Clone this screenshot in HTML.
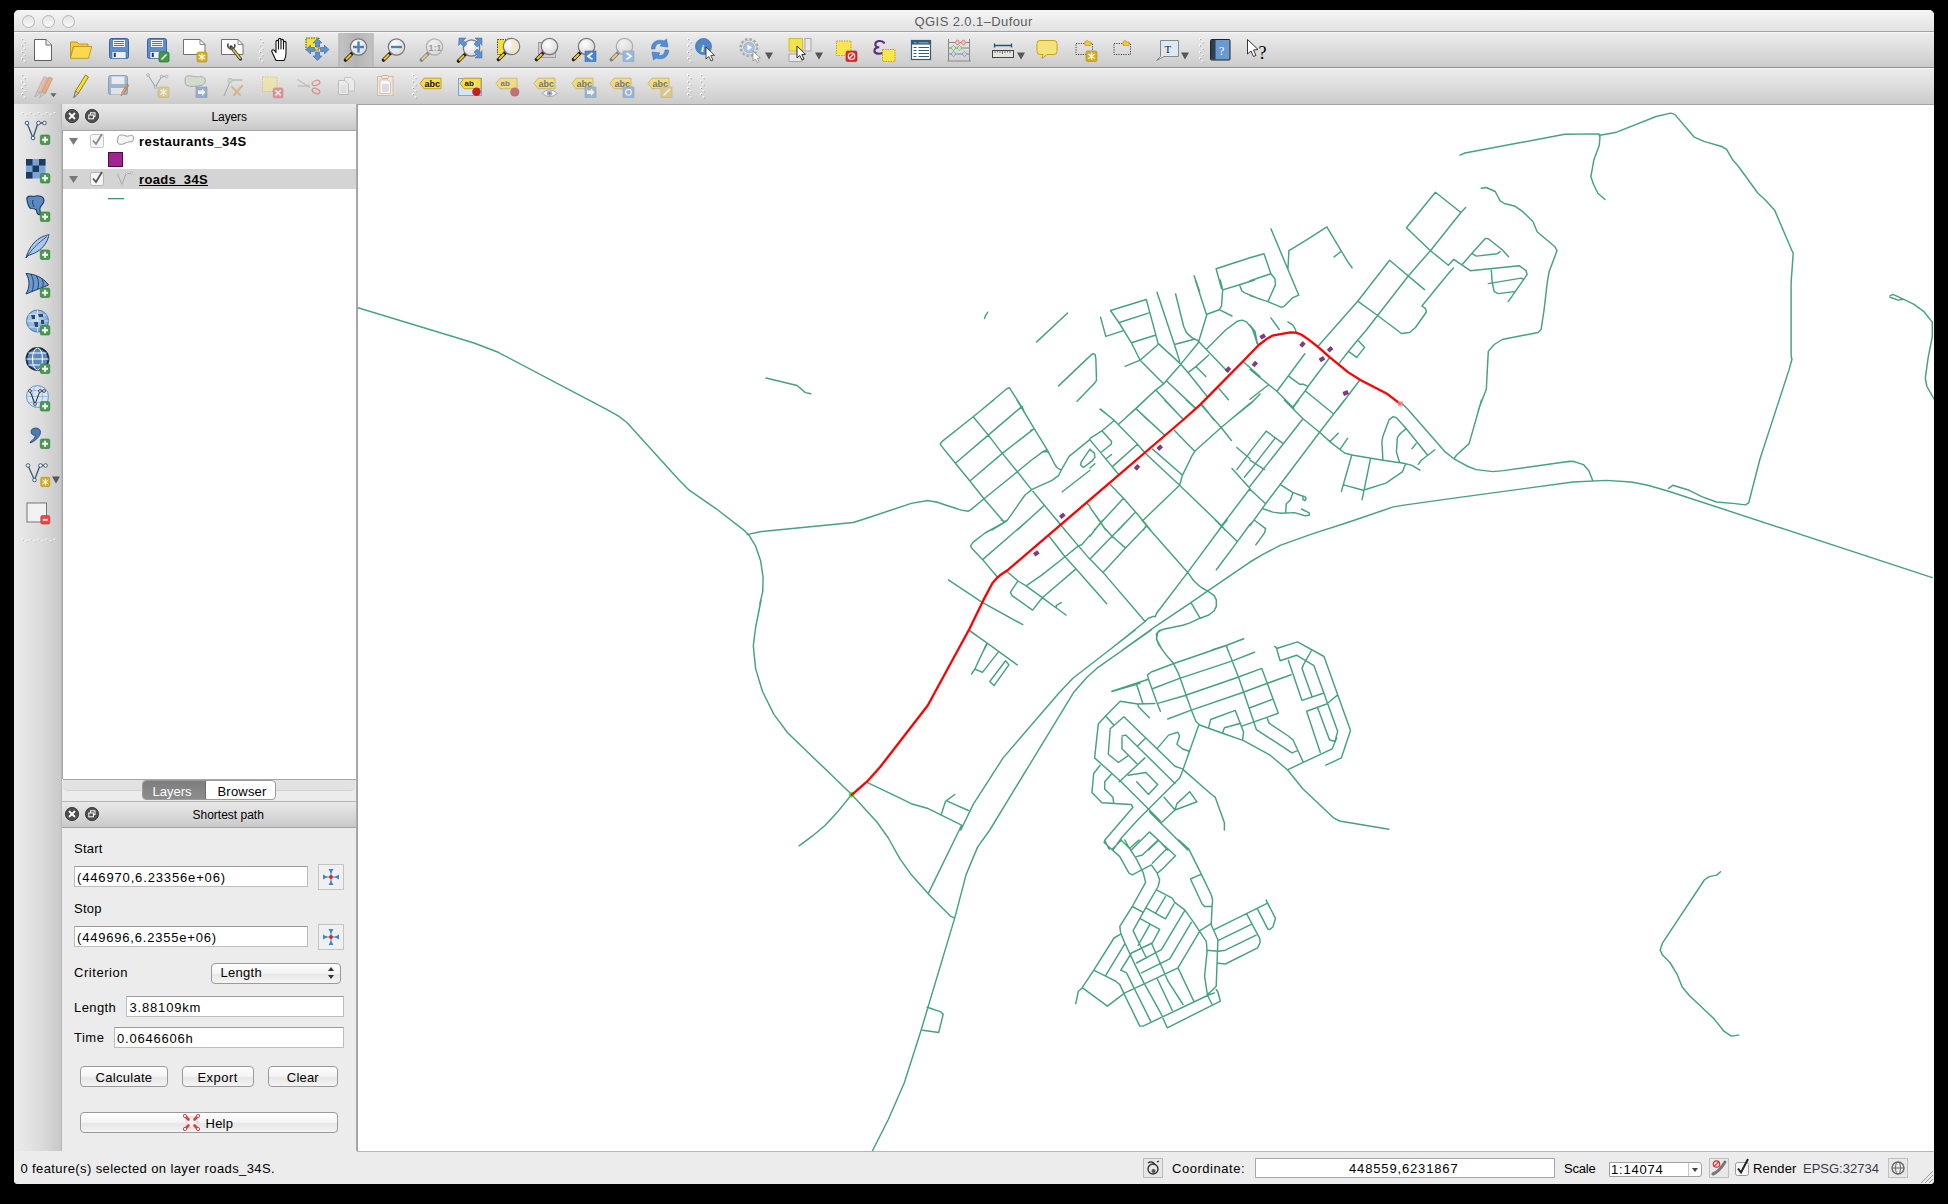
<!DOCTYPE html>
<html><head><meta charset="utf-8"><title>QGIS</title>
<style>
body{margin:0;width:1948px;height:1204px;background:#000;position:relative;overflow:hidden;font-family:"Liberation Sans",sans-serif;color:#000}
.a{position:absolute}
.t{position:absolute;white-space:pre;font-size:13px;line-height:15px}
.tb{background:linear-gradient(#ececec,#d9d9d9 60%,#cbcbcb);border-top:1px solid #f6f6f6;border-bottom:1px solid #8e8e8e}
.grip{position:absolute;width:5px;height:26px;background-image:radial-gradient(circle,#fafafa 0.9px,transparent 1.2px),radial-gradient(circle,#a8a8a8 0.7px,transparent 1px);background-size:4px 4px,4px 4px;background-position:0 0,1px 1px}
.hdr{background:linear-gradient(#e9e9e9,#d4d4d4 70%,#c8c8c8);border-bottom:1px solid #a4a4a4}
.dbtn{position:absolute;width:14px;height:14px;border-radius:50%;background:radial-gradient(circle at 50% 35%,#6a6a6a,#333 80%)}
.inp{position:absolute;background:#fff;border:1px solid #bdbdbd;border-top-color:#9c9c9c;box-sizing:border-box}
.btn{position:absolute;box-sizing:border-box;border:1px solid #9a9a9a;border-radius:4px;background:linear-gradient(#fff,#f3f3f3 50%,#e6e6e6 51%,#f4f4f4);text-align:center;font-size:13px;line-height:19px}
</style></head><body>
<!-- window -->
<div class="a" style="left:14px;top:10px;width:1920px;height:1174px;background:#ececec;border-radius:5px 5px 4px 4px;overflow:hidden">
  <!-- title bar -->
  <div class="a" style="left:0;top:0;width:1920px;height:21px;background:linear-gradient(#f5f5f5,#e2e2e2);border-bottom:1px solid #a2a2a2"></div>
  <div class="a" style="left:8px;top:5px;width:11px;height:11px;border-radius:50%;border:1px solid #b4b4b4;background:linear-gradient(#e2e2e2,#fafafa)"></div>
  <div class="a" style="left:28px;top:5px;width:11px;height:11px;border-radius:50%;border:1px solid #b4b4b4;background:linear-gradient(#e2e2e2,#fafafa)"></div>
  <div class="a" style="left:48px;top:5px;width:11px;height:11px;border-radius:50%;border:1px solid #b4b4b4;background:linear-gradient(#e2e2e2,#fafafa)"></div>
  <div class="t" style="left:900.6px;top:3.7px;font-size:13px;color:#5c5c5c;letter-spacing:0.4px">QGIS 2.0.1–Dufour</div>
  <!-- toolbar 1 -->
  <div class="a tb" style="left:0;top:22px;width:1920px;height:34px"></div>
  <!-- toolbar 2 -->
  <div class="a tb" style="left:0;top:58px;width:1920px;height:35px"></div>
  <!-- left toolbar -->
  <div class="a" style="left:0;top:94px;width:48px;height:1048px;background:linear-gradient(90deg,#ececec,#dadada 60%,#c8c8c8)"></div>
  <!-- status bar -->
  <div class="a" style="left:0;top:1141px;width:1920px;height:33px;background:#ececec"></div>
</div>
<div id="map" class="a" style="left:357px;top:104px;width:1577px;height:1048px;background:#fff;overflow:hidden">
<svg class="a" style="left:0;top:0" width="1577" height="1047" viewBox="0 0 1577 1047"><path fill="none" stroke="#45a27f" stroke-width="1.45" stroke-linejoin="round" stroke-linecap="round" d="M0.0,203.5 116.3,238.8 141.2,248.3 249.1,305.2 261.6,312.2 269.9,318.5 321.8,375.8 332.2,386.2 359.2,404.8 386.2,425.6 392.4,431.8 398.6,442.2 403.6,456.7 406.1,473.4 405.7,487.9 402.8,499.9M390.3,430.6 402.8,427.7 496.2,418.5 506.6,415.2 554.3,399.4 570.9,396.5 581.3,398.6 600.0,404.8M409.0,274.0 440.1,281.5 448.4,288.6 453.8,289.8M1103.0,51.1 1108.0,49.0 1207.7,30.3 1240.9,29.9 1243.0,31.2 1259.6,28.2 1299.1,12.5 1313.6,9.1 1317.8,10.4 1337.3,33.2 1346.9,37.4 1365.6,42.8 1369.7,45.7 1375.9,56.1 1381.3,62.3 1400.9,89.3 1407.1,94.7 1417.5,105.9 1436.2,149.5 1434.1,178.6 1434.1,251.3 1434.9,255.5 1432.0,265.9 1402.9,355.2 1391.7,398.8 1388.4,400.9 1378.0,399.6 1359.3,398.0 1344.8,392.6 1332.3,386.3 1315.7,381.3 1311.6,384.3M1241.8,29.9 1243.0,33.2 1242.2,41.5 1236.8,56.1 1233.9,72.7 1236.8,81.0 1240.9,89.3 1248.0,95.5M1207.7,358.1 1216.0,357.2 1226.4,360.6 1231.8,366.8 1235.5,375.9M1216.0,378.0 1249.2,376.4 1274.2,378.0 1290.8,381.3 1311.6,387.2 1575.3,473.6M1533.0,191.9 1535.9,190.3 1546.3,195.2 1541.3,196.1 1533.0,193.2M1546.3,195.2 1556.6,200.2 1567.0,207.7 1575.3,218.1 1575.3,232.6 1571.2,253.4 1568.3,274.2 1569.9,282.5 1577.0,294.9M404.1,496.0 398.6,523.5 396.3,541.8 398.6,564.6 405.5,587.5 416.9,610.4 430.6,628.7 494.7,690.5 519.9,718.0 531.3,734.0 542.8,754.6 554.2,770.6 572.5,791.2 593.1,811.8 597.7,814.1M442.1,741.8 455.8,731.7 468.2,721.2 481.0,707.4 494.7,690.5M509.4,678.2 540.5,692.8 554.2,699.7 570.2,704.2 604.6,721.2M571.6,788.9 604.6,721.2M584.0,711.1 588.5,697.4 597.7,690.5M590.8,697.4 611.4,706.5M515.3,1047.0 531.3,1015.5 547.3,978.8 563.4,928.5 597.7,814.1 609.1,770.6 620.6,743.1 632.8,726.0M565.7,926.2 581.7,928.5 586.2,910.2 584.0,907.9 570.2,903.3M627.4,214.5 628.8,211.1 630.8,208.2M679.7,237.9 710.6,209.0M701.6,281.9 730.5,254.4 735.5,249.8 738.1,250.4 738.9,255.4 739.5,276.3 737.5,279.3 720.1,297.3M624.4,306.0 649.8,284.7 652.4,283.7 654.7,287.3 666.7,306.0M660.7,306.0 665.7,302.9M859.1,164.7 893.0,153.7M859.1,164.7 864.5,184.6M837.2,171.7 842.6,187.6M743.6,213.2 748.8,232.4 765.7,226.9M753.5,206.5 789.3,195.5 801.1,239.4M753.5,206.5 762.2,219.0 774.4,238.8 783.1,256.2 805.8,278.9M809.9,277.2 838.3,303.9M798.8,285.9 826.7,316.0M779.0,304.5 790.7,316.0M743.0,305.1 757.0,316.0M766.3,316.0 798.8,285.9 806.4,280.1 823.2,260.9 841.3,238.8 850.0,210.3 862.2,205.7 864.5,202.2 865.7,185.9 863.3,176.0M865.7,185.9 882.5,180.7 897.7,176.0M882.5,180.7 884.9,187.0 887.8,188.8 903.0,195.2M862.2,205.7 875.0,212.0M831.4,268.4 838.9,262.6 851.7,251.0M849.4,245.2 868.6,226.0 880.2,217.3 884.9,216.1 889.5,217.9 895.3,224.8 898.2,233.0 900.0,239.4M800.0,188.2 817.4,240.5 822.7,257.4M818.6,190.0 826.7,222.5 829.6,228.9 834.9,233.6 840.7,236.5 870.9,267.9M817.4,240.5 837.2,235.3M801.1,239.4 822.7,259.1 831.4,269.0 850.0,292.3M838.9,262.6 848.8,272.5M886.6,258.0 903.0,272.5M861.6,284.1 871.5,295.8M845.3,301.0 857.0,316.0M838.3,176.0 849.4,210.3M873.2,316.0 895.3,298.1 903.0,290.0M761.6,218.8 791.3,209.1M774.4,238.8 798.2,231.2M768.0,262.3 783.1,256.2 801.1,240.5M893.0,153.7 907.0,149.7 913.9,169.7 917.9,174.7 918.5,180.6 910.9,197.6M893.0,176.7 913.9,169.7M893.0,191.6 910.9,197.6 923.9,203.2 926.9,202.6 935.9,193.6 941.8,191.2 913.9,124.8M930.9,165.7 931.9,146.7 934.9,144.8 952.8,133.8 969.8,122.8 990.7,157.7 995.1,163.7M977.1,152.9 983.7,147.7M1073.4,146.7 1049.5,123.8 1078.4,88.3 1103.9,108.5 1108.7,103.5M935.4,303.7 948.1,287.0 951.9,281.3 972.4,254.0M982.5,258.9 991.5,247.3 1000.1,236.8 1009.4,226.0 1020.6,211.5 1051.5,171.7 1073.4,146.7 1103.9,108.5M1073.4,146.7 1091.4,161.3 1096.8,155.3 1113.3,166.7 1162.2,161.7 1169.1,166.7 1170.1,170.7 1151.2,197.6M1105.9,159.7 1116.3,147.7 1128.3,134.4 1131.3,134.8 1145.2,145.8 1151.6,152.7M1115.3,149.7 1119.3,152.1 1140.2,149.7 1143.2,147.7M1134.2,164.7 1135.2,178.6 1137.2,187.6 1141.2,189.6 1157.2,187.6M1131.3,179.6 1164.2,174.1 1166.5,175.3M960.8,242.4 1000.7,197.2 1032.6,156.3 1067.5,185.6M1000.7,197.2 1020.6,211.5 1044.5,229.5 1052.5,228.5 1058.5,223.5 1069.4,208.0 1068.5,204.6 1064.9,202.0 1090.4,170.7 1096.4,164.1M992.1,247.8 999.7,253.4 1007.6,243.4 1001.7,237.1M893.0,265.4 919.9,287.3 936.9,304.3M919.9,287.3 947.8,249.8M931.9,272.4 942.8,280.3 946.8,280.3 950.8,282.3M893.0,295.3 910.9,281.3M948.8,287.3 971.8,306.0M980.1,306.0 1002.7,276.3M1124.3,84.3 1129.3,83.5 1138.2,87.5 1143.2,96.9 1147.2,99.5 1158.2,102.3 1166.1,107.9 1176.1,117.8 1180.1,127.8 1198.0,142.8 1200.0,146.7 1192.1,167.7 1190.1,179.6 1187.1,205.6 1184.1,225.5 1181.1,228.5 1145.2,235.5 1137.2,240.5 1131.3,247.4 1129.3,285.3 1121.3,306.0M913.9,213.9 922.3,225.5M930.9,217.9 935.9,221.1 938.5,225.5 938.9,228.5M893.0,221.1 898.0,227.5 900.0,237.5 901.0,240.5M636.7,296.0 616.2,312.7 584.9,337.6 583.3,339.7 584.3,341.9 598.4,359.2 612.9,377.0 627.0,394.8 647.5,418.5M659.9,296.0 664.2,303.0 677.2,324.6 690.1,345.7 697.7,360.2 699.9,363.5 704.2,366.2 701.5,371.6 695.0,376.4 675.6,385.1 668.0,391.0 662.6,398.6 654.5,410.4 650.2,416.4 647.5,418.5 635.1,426.0M616.2,312.7 631.3,331.1 645.3,349.4 660.4,367.8 674.5,385.6 687.4,401.3 708.0,426.0M664.2,303.0 631.3,331.1 598.4,359.2M677.2,324.6 645.3,349.4 612.9,377.0M673.9,326.2 677.2,325.1M690.1,345.7 686.4,347.3 673.9,356.5 660.4,367.8 627.0,394.8 614.0,405.6 611.3,407.2 604.3,406.1 589.2,401.3 579.5,398.0 573.0,396.9M685.3,347.8 690.7,347.8M687.4,401.3 660.4,426.0M705.3,387.8 733.0,366.2M704.2,366.2 712.3,352.1 717.1,348.4 733.0,335.4M733.0,345.1 724.1,358.1 723.6,360.8 726.3,363.5 733.0,358.6M730.1,399.6 733.0,402.3M743.8,305.2 757.3,316.5 780.5,340.3 789.1,350.0 822.6,381.3 864.7,421.8 868.0,426.0M788.1,296.0 778.9,304.6 762.1,319.8M757.3,316.5 744.9,326.8 733.0,334.3M744.9,326.8 754.6,337.6 754.1,340.3 744.9,347.8M733.0,335.9 743.8,348.9 761.6,370.5M754.6,350.5 749.2,354.8M733.0,345.7 737.3,348.9 737.9,353.2 735.2,357.0 733.0,358.1M733.0,364.0 737.9,359.7M780.5,340.3 756.2,361.9M778.9,304.6 807.5,331.1M807.5,296.0 826.4,315.4M829.1,296.0 838.3,304.1M844.7,301.4 864.2,323.5 874.4,336.5M817.2,326.2 837.7,347.3 864.2,323.5 893.0,299.2M837.7,347.3 834.5,352.7 825.3,371.6 822.6,381.3M795.6,345.1 825.3,371.0M753.0,380.2 766.5,394.2 785.9,416.4 793.5,426.0M733.0,403.4 743.8,418.5 748.7,426.0M766.5,394.2 737.3,426.0M777.8,408.8 761.6,426.0M822.6,381.3 785.9,416.4M789.1,421.8 786.4,426.0M893.0,384.5 864.7,421.8 862.0,426.0M875.0,364.6 893.0,384.5M879.8,343.5 893.0,354.8M879.8,365.6 893.0,348.4M887.4,373.2 893.0,366.2M650.2,416.0 647.5,418.2 639.9,422.5 628.1,429.0 616.2,438.1 613.5,441.9 615.1,444.6 625.9,455.9 640.5,473.2M644.3,416.0 647.5,417.6 650.2,416.0M671.2,416.0 625.9,455.4M699.9,416.0 708.5,426.8 721.4,441.9 733.0,455.4M691.8,431.7 708.0,452.7 718.7,464.6 733.0,480.8M650.2,467.8 661.0,477.0 669.1,481.9 685.3,493.7 699.3,504.0 709.0,511.0M661.0,477.0 655.1,485.6 653.4,488.3 655.1,491.6 675.6,506.1 685.3,493.7 718.7,465.1M669.1,481.9 684.7,471.1 707.4,453.2 721.4,441.9 724.7,440.8 733.0,431.1M699.3,504.0 699.3,501.3 704.2,498.6M591.4,475.9 624.8,498.1 665.8,520.7M612.4,526.7 639.9,546.0M629.7,540.7 627.0,546.0M733.0,432.2 743.8,418.2 746.0,416.0M741.6,416.0 743.8,418.2 747.0,423.6 755.1,432.2 768.6,444.1M770.8,416.0 755.1,432.2 733.0,454.9M733.0,454.9 746.0,468.4 788.1,517.5M789.7,421.9 768.6,444.1 746.0,468.4M784.8,416.0 789.7,421.9 830.7,468.4 836.6,476.5 841.0,480.8 845.3,484.0 851.2,487.3 857.2,491.6 859.3,495.9 859.3,502.4 857.2,506.7 851.8,511.0 843.1,514.2 832.3,519.1 825.8,521.3 807.5,525.0 802.1,526.7 799.4,529.9 799.9,535.8 805.3,546.0M870.1,416.0 864.7,422.5 830.7,468.4 803.2,504.5 799.9,508.8 798.3,512.6 795.6,512.6 791.3,514.2 788.1,517.5 752.4,546.0M858.2,416.0 864.7,422.5 880.4,437.6M893.0,420.3 880.4,437.6 859.3,465.7M893.0,458.1 851.2,486.7 833.9,498.6 797.8,522.9 765.4,546.0M833.9,498.6 843.1,514.2M733.0,480.8 749.7,499.7M855.0,546.0 869.6,541.2 886.8,534.8M869.6,541.2 870.7,546.0M927.3,296.0 946.0,314.7 962.6,328.2 974.0,338.6 987.5,349.0 994.8,351.0 1025.9,356.2 1046.7,359.3 1055.0,361.4 1062.9,366.2M959.5,296.0 976.1,309.5M987.5,296.0 962.6,328.2 908.6,399.8 893.0,421.6M946.0,314.7 893.0,382.2M893.0,347.9 909.2,327.1 926.2,339.6M917.9,334.4 893.0,366.6M893.0,356.2 907.5,365.6M893.0,385.3 908.6,399.8M941.8,296.0 936.2,303.3M893.0,299.7 897.2,296.0M972.9,337.5 981.3,329.2M983.3,344.8 990.6,334.4M994.8,351.0 984.4,387.4M987.5,381.1 1006.2,386.3 1029.0,379.1 1045.6,367.6 1048.3,360.4M1013.4,355.2 1005.1,395.7M1025.9,356.2 1024.9,337.5 1025.9,332.3 1032.1,315.7 1036.3,312.6 1039.4,313.7 1048.7,324.0 1070.5,351.0M1042.5,358.3 1039.4,347.9 1040.4,333.4 1043.6,329.2 1048.7,325.1M1055.0,344.8 1059.1,339.6M1061.2,360.4 1064.3,356.2 1077.8,345.8M1044.6,299.1 1050.8,305.3 1088.2,347.9 1097.5,355.2 1111.0,362.5 1119.3,365.6 1136.0,367.6 1146.3,366.6 1213.0,357.3M1097.5,354.1 1099.6,351.0 1112.1,339.6 1124.5,296.0M893.0,458.0 905.5,450.7 923.1,441.4 955.3,429.9 990.6,418.5 1036.3,402.9 1048.7,400.9 1100.7,393.6 1216.0,378.0M924.1,381.1 935.6,388.4 943.9,391.5 948.0,392.6 949.1,394.6 948.0,396.7 946.0,395.7 946.0,392.6M935.6,389.4 933.5,395.7 929.3,399.8 928.7,408.1M906.5,405.0 915.8,408.1 924.1,409.2 937.6,408.6 948.0,411.7 952.2,411.2 952.2,408.8 944.5,405.0M893.0,420.6 897.2,416.0 908.6,424.7 907.5,428.9 902.3,436.2 898.8,440.7M804.3,526.0 800.7,528.7 799.4,535.1 801.6,540.6 808.9,550.7 816.2,558.9 821.7,569.9 834.5,606.4 839.0,617.4 842.7,621.0 865.5,629.3 886.6,636.6 913.1,651.2 930.4,665.8 946.0,685.0 977.0,714.2 982.5,717.0 1031.9,725.2M755.0,587.2 791.5,575.3 790.6,570.8 794.3,568.0 816.2,559.8 869.2,541.5 886.6,534.8M796.1,584.5 822.6,574.4 874.7,557.1 897.5,548.3M801.6,599.1 827.2,591.8 880.2,573.5 904.8,564.4 921.3,609.2 885.6,621.9M810.7,615.0 833.6,606.4 885.6,588.5 911.2,579.0 934.1,570.8M779.7,580.8 786.0,600.0M791.5,575.3 799.8,598.2 803.4,607.3M869.2,541.5 882.0,574.4 899.4,625.6 935.0,648.8 940.5,646.6M910.3,614.6 912.1,619.2 931.3,632.0 935.9,635.7 941.4,647.5 946.0,657.6M893.0,603.7 915.8,595.1M851.8,622.9 853.7,615.5 878.3,606.4 886.6,628.3 885.6,635.7M865.5,629.3 867.4,623.8 883.8,619.2M917.6,542.4 920.4,544.3 940.5,537.9 967.0,552.5 993.5,626.5 984.3,653.9 968.8,661.2M919.5,544.3 923.1,556.7 939.6,551.2 956.9,561.6 980.7,627.4 977.9,637.5 972.5,635.7 960.6,603.7M954.2,547.0 946.9,559.8 945.0,564.4 955.1,592.7M931.3,556.2 945.0,596.4 967.0,589.0M949.6,607.3 969.7,600.0 980.7,590.9M949.6,607.3 963.3,648.4M930.4,665.8 975.2,644.8 979.8,633.8M780.6,600.0 763.2,597.3 748.6,611.9 741.3,620.1 737.6,653.9 764.1,677.7 803.4,717.0M748.6,611.9 756.8,621.0M797.9,599.5 780.6,600.0 781.5,602.8 792.4,613.7M753.2,624.7 766.9,612.8 818.0,662.2 825.3,664.9M753.2,624.7 751.3,650.3 761.4,658.5 770.5,652.1M765.0,632.0 768.7,631.1 808.9,670.4 818.0,679.5M765.0,633.8 765.0,644.8 779.7,659.4M780.6,642.0 787.9,634.7M800.7,643.9 811.6,631.1 820.8,628.3 822.6,632.0 819.9,640.2 825.3,644.8 832.7,647.5M841.8,621.0 825.3,667.6 822.6,674.0 814.4,682.3 796.1,700.5 779.7,717.0 764.1,734.3 755.9,746.0M825.3,664.9 854.6,690.5 858.2,693.2 867.4,718.8 867.4,726.1M743.1,661.2 736.7,669.5 734.9,688.6 744.9,698.7 774.2,700.5 776.0,703.3 747.7,736.2 752.2,745.3M754.1,670.4 747.7,677.7 747.7,685.0 755.9,693.2 756.8,699.6M762.3,677.7 787.9,653.9M771.4,671.3 788.8,668.5 800.7,680.4 791.5,690.5 779.7,677.7M807.1,693.2 818.0,706.0 804.3,718.8M818.0,706.0 840.0,697.8 832.7,687.7 819.9,699.6 818.0,706.0M792.4,707.8 830.8,746.0M765.0,737.1 774.2,746.0M774.2,746.0 792.4,727.9 801.6,736.2 810.7,746.0M791.5,746.0 801.6,736.2M764.5,736.0 755.4,745.1M782.0,736.0 773.6,743.5M801.1,736.0 785.3,751.0 779.5,752.6M810.2,744.3 795.3,759.3M801.1,736.0 818.5,751.8 804.4,765.9 800.2,769.2M747.9,736.0 747.1,738.5 762.8,752.6 772.0,769.2 775.3,770.9 794.4,760.9M821.8,736.0 831.8,745.1 844.3,770.1 854.2,790.8 855.6,795.8 855.1,802.5 854.2,820.7 860.9,835.7 859.2,882.2 854.2,887.2 850.1,890.5 855.1,900.5M844.3,770.1 833.5,775.0 845.1,800.0 847.6,802.5 855.1,802.5M767.8,736.0 772.0,743.5 779.5,755.1 786.1,768.4 788.6,778.4 775.3,802.5 762.8,822.4 763.7,829.1 767.8,839.0 779.5,863.9 786.9,878.9 803.6,908.8 810.2,923.8M794.4,760.9 800.2,769.2 802.7,775.9 801.1,782.5 788.6,804.1 776.1,826.6 782.0,839.0 789.4,854.0M775.3,802.5 786.1,808.3M799.4,785.8 815.2,794.2 817.7,798.3 827.7,805.8 836.0,817.4 842.6,827.4 849.3,837.4 850.1,847.3 847.6,872.3 850.1,888.9M808.5,792.5 798.6,809.1M789.4,804.1 808.5,814.9 816.9,800.0M782.8,814.4 802.7,825.4 795.3,839.0 774.5,849.0M792.8,820.7 781.1,841.5M827.7,806.6 804.4,845.7 779.5,859.0M834.3,818.3 812.7,854.8 784.5,868.9M842.6,827.4 821.0,863.9 789.4,878.9 767.8,888.9 750.4,902.2 725.5,883.9 721.3,887.2 718.8,899.7M794.4,839.0 811.0,877.2 826.0,900.5M821.0,863.9 836.8,897.2M800.2,874.7 815.2,906.3M762.8,830.7 757.0,834.0 737.1,865.6 725.5,883.1M767.8,839.9 748.7,871.4M774.5,849.0 763.7,866.4M737.1,866.4 758.7,877.2 762.8,880.6 767.8,891.4 782.8,922.1 786.1,922.1 852.6,890.5 857.6,888.9M764.5,866.4 769.5,868.9 793.6,917.1M810.2,923.8 863.4,897.2 860.9,888.0 859.2,885.5M778.2,526.0 715.9,574.2 702.6,588.3 646.1,653.9 616.2,700.4 603.8,726.0M794.3,526.0 740.0,564.2 730.0,573.3 716.7,588.3 632.8,726.0M612.1,526.0 660.2,560.9M629.5,540.1 617.9,565.0 625.4,568.4 641.1,548.4M614.6,570.0 617.9,565.0M648.6,556.7 651.9,560.9 637.0,581.6 632.8,577.5 648.6,556.7M754.9,587.5 783.0,579.2M1363.5,767.7 1359.6,771.1 1352.2,772.6 1347.3,776.0 1305.6,838.8 1303.1,846.2 1305.6,851.1 1312.9,858.5 1320.3,870.7 1325.2,883.0 1332.6,891.8 1357.1,914.9 1366.9,927.2 1374.3,932.1 1381.7,931.1M843.0,826.7 854.2,819.6M849.7,846.2 861.3,847.3 868.4,846.2 899.1,831.2M857.2,825.6 910.6,799.1 909.2,796.1M862.0,836.1 894.2,820.4M889.7,809.9 902.8,834.6 903.2,838.3 900.6,843.9 868.4,860.0 861.3,859.3M900.2,804.3 910.7,824.9 912.5,825.6 915.9,823.0 918.5,814.4 910.6,799.1"/><circle cx="494.7" cy="690.8" r="2.8" fill="#3ddc4a" opacity="0.85"/><path fill="none" stroke="#ff0000" stroke-width="2.3" stroke-linejoin="round" stroke-linecap="round" d="M494.7,690.8 509.9,677.7 522.9,663.3 570.7,601.5 612.5,524.8 626.5,495.9 635.5,479.0 640.4,473.6 643.0,471.3 650.4,466.3 729.8,398.4 826.0,316.0 843.0,300.9 884.8,258.5 901.7,241.0 910.8,234.2 915.3,231.7 922.0,230.3 933.4,228.4 939.0,228.6 944.6,230.8 951.4,235.4 961.6,243.3 972.9,253.4 991.0,268.1 1003.4,276.0 1030.5,290.1 1042.9,299.7"/><rect x="677.0" y="447.7" width="4.6" height="3.4" fill="#92338c" stroke="#3a1040" stroke-width="0.5" transform="rotate(-35 679.3 449.4)"/><rect x="703.0" y="410.1" width="4.6" height="3.4" fill="#92338c" stroke="#3a1040" stroke-width="0.5" transform="rotate(-40 705.3 411.8)"/><rect x="777.7" y="361.6" width="4.6" height="3.4" fill="#92338c" stroke="#3a1040" stroke-width="0.5" transform="rotate(-50 780.0 363.3)"/><rect x="800.4" y="341.9" width="4.6" height="3.4" fill="#92338c" stroke="#3a1040" stroke-width="0.5" transform="rotate(-40 802.7 343.6)"/><rect x="868.7" y="263.8" width="4.6" height="3.4" fill="#92338c" stroke="#3a1040" stroke-width="0.5" transform="rotate(-50 871.0 265.5)"/><rect x="895.5" y="258.3" width="4.6" height="3.4" fill="#92338c" stroke="#3a1040" stroke-width="0.5" transform="rotate(-50 897.8 260.0)"/><rect x="903.4" y="230.8" width="4.6" height="3.4" fill="#92338c" stroke="#3a1040" stroke-width="0.5" transform="rotate(-30 905.7 232.5)"/><rect x="943.2" y="238.7" width="4.6" height="3.4" fill="#92338c" stroke="#3a1040" stroke-width="0.5" transform="rotate(-50 945.5 240.4)"/><rect x="970.8" y="243.6" width="4.6" height="3.4" fill="#92338c" stroke="#3a1040" stroke-width="0.5" transform="rotate(-40 973.1 245.3)"/><rect x="962.7" y="253.4" width="4.6" height="3.4" fill="#92338c" stroke="#3a1040" stroke-width="0.5" transform="rotate(-30 965.0 255.1)"/><rect x="986.4" y="287.3" width="4.6" height="3.4" fill="#92338c" stroke="#3a1040" stroke-width="0.5" transform="rotate(-20 988.7 289.0)"/><rect x="1040.8" y="297.3" width="5" height="5" fill="#ff8080" opacity="0.75"/></svg>
<div class="a" style="left:0;top:0;width:1px;height:1047px;background:#a3a3a3"></div>
<div class="a" style="left:0;top:0;width:1577px;height:1px;background:#a3a3a3"></div>
<div class="a" style="left:0;top:1047px;width:1577px;height:1px;background:#b6b6b6"></div>
</div>
<svg class="a" style="left:0;top:0" width="1948" height="104" viewBox="0 0 1948 104">
<defs>
<linearGradient id="selbg" x1="0" y1="0" x2="1" y2="0"><stop offset="0" stop-color="#c4c4c4"/><stop offset="0.5" stop-color="#b4b4b4"/><stop offset="1" stop-color="#c4c4c4"/></linearGradient>
<radialGradient id="lens" cx="0.4" cy="0.35" r="0.7"><stop offset="0" stop-color="#ffffff"/><stop offset="1" stop-color="#d6d6d6"/></radialGradient>




</defs>
<!-- ===== toolbar 1 ===== -->
<g transform="translate(21,38)"><circle cx="1" cy="1" r="1.1" fill="#fff"/><circle cx="3.5" cy="4.2" r="1.1" fill="#fff"/><circle cx="1" cy="7.4" r="1.1" fill="#fff"/><circle cx="3.5" cy="10.6" r="1.1" fill="#fff"/><circle cx="1" cy="13.8" r="1.1" fill="#fff"/><circle cx="3.5" cy="17" r="1.1" fill="#fff"/><circle cx="1" cy="20.2" r="1.1" fill="#fff"/><circle cx="3.5" cy="23.4" r="1.1" fill="#fff"/>
<circle cx="1.6" cy="1.6" r="0.7" fill="#9c9c9c"/><circle cx="4.1" cy="4.8" r="0.7" fill="#9c9c9c"/><circle cx="1.6" cy="8" r="0.7" fill="#9c9c9c"/><circle cx="4.1" cy="11.2" r="0.7" fill="#9c9c9c"/><circle cx="1.6" cy="14.4" r="0.7" fill="#9c9c9c"/><circle cx="4.1" cy="17.6" r="0.7" fill="#9c9c9c"/><circle cx="1.6" cy="20.8" r="0.7" fill="#9c9c9c"/><circle cx="4.1" cy="24" r="0.7" fill="#9c9c9c"/></g>
<!-- new -->
<path d="M34.5,39.5 H46 L51.5,45 V60.5 H34.5 Z" fill="#fff" stroke="#606060" stroke-width="1"/><path d="M46,39.5 V45 H51.5" fill="#eee" stroke="#606060" stroke-width="0.9"/>
<!-- open -->
<path d="M70.5,42 H77 L79,44 H88 V47 H73 L70.5,58 Z" fill="#f5c93a" stroke="#c29a1d" stroke-width="1"/><path d="M73.5,46.5 H91.8 L88.5,58.3 H70.5 Z" fill="#ffd94f" stroke="#c29a1d" stroke-width="1"/>
<!-- save -->
<rect x="109.5" y="38.5" width="19" height="20" rx="2" fill="#5f8fcb" stroke="#3a659c" stroke-width="1"/><rect x="112.5" y="39.5" width="13" height="8" fill="#f4f4f4" stroke="#3a659c" stroke-width="0.6"/><path d="M114,41.5 H124 M114,43.5 H124 M114,45.5 H124" stroke="#333" stroke-width="0.7"/><rect x="112" y="51.5" width="14" height="7" fill="#eee" stroke="#3a659c" stroke-width="0.6"/><rect x="113.8" y="52.8" width="2" height="4.2" fill="#233f66"/>
<!-- save as -->
<rect x="147.5" y="38.5" width="19" height="20" rx="2" fill="#5f8fcb" stroke="#3a659c" stroke-width="1"/><rect x="150.5" y="39.5" width="13" height="8" fill="#f4f4f4" stroke="#3a659c" stroke-width="0.6"/><path d="M152,41.5 H162 M152,43.5 H162 M152,45.5 H162" stroke="#333" stroke-width="0.7"/><rect x="150" y="51.5" width="14" height="7" fill="#eee" stroke="#3a659c" stroke-width="0.6"/><rect x="151.8" y="52.8" width="2" height="4.2" fill="#233f66"/>
<rect x="159" y="52" width="10" height="10" rx="1.5" fill="#3e9a45" stroke="#2b7a33" stroke-width="0.8"/><path d="M161.5,59.5 L166.5,54.5" stroke="#fff" stroke-width="1.6"/>
<!-- new composer -->
<path d="M183.5,39.5 H200 L205,44.5 V54.5 H183.5 Z" fill="#fff" stroke="#707070" stroke-width="1"/><path d="M200,39.5 V44.5 H205" fill="none" stroke="#707070" stroke-width="0.8"/>
<rect x="197" y="52" width="10" height="10" rx="1.5" fill="#d7ae1c" stroke="#b08b12" stroke-width="0.6"/><path d="M202,53.5 V60.5 M198.8,55 L205.2,59 M198.8,59 L205.2,55" stroke="#fff" stroke-width="1.1"/>
<!-- composer manager -->
<path d="M221.5,39.5 H238 L243,44.5 V54.5 H221.5 Z" fill="#fff" stroke="#707070" stroke-width="1"/><path d="M238,39.5 V44.5 H243" fill="none" stroke="#707070" stroke-width="0.8"/>
<path d="M231,47 L240.5,59" stroke="#333" stroke-width="3.2" stroke-linecap="round"/><path d="M232,48.3 L240,58.2" stroke="#e6c35a" stroke-width="1.8" stroke-linecap="round"/><path d="M228.5,43.5 A3.5,3.5 0 1 0 234.5,44" fill="none" stroke="#555" stroke-width="1.6"/>
<g transform="translate(259,38)"><circle cx="1" cy="1" r="1.1" fill="#fff"/><circle cx="3.5" cy="4.2" r="1.1" fill="#fff"/><circle cx="1" cy="7.4" r="1.1" fill="#fff"/><circle cx="3.5" cy="10.6" r="1.1" fill="#fff"/><circle cx="1" cy="13.8" r="1.1" fill="#fff"/><circle cx="3.5" cy="17" r="1.1" fill="#fff"/><circle cx="1" cy="20.2" r="1.1" fill="#fff"/><circle cx="3.5" cy="23.4" r="1.1" fill="#fff"/>
<circle cx="1.6" cy="1.6" r="0.7" fill="#9c9c9c"/><circle cx="4.1" cy="4.8" r="0.7" fill="#9c9c9c"/><circle cx="1.6" cy="8" r="0.7" fill="#9c9c9c"/><circle cx="4.1" cy="11.2" r="0.7" fill="#9c9c9c"/><circle cx="1.6" cy="14.4" r="0.7" fill="#9c9c9c"/><circle cx="4.1" cy="17.6" r="0.7" fill="#9c9c9c"/><circle cx="1.6" cy="20.8" r="0.7" fill="#9c9c9c"/><circle cx="4.1" cy="24" r="0.7" fill="#9c9c9c"/></g>
<!-- hand -->
<path d="M276,60.5 L272,52 C271,50 273,49 274.5,50.5 L276,52.5 V41.5 C276,40 278.5,40 278.5,41.5 V49 V39.5 C278.5,38 281,38 281,39.5 V49 V40.5 C281,39 283.5,39 283.5,40.5 V49 V42.5 C283.5,41 286,41 286,42.5 V53 C286,57 285,59 284,60.5 Z" fill="#fff" stroke="#111" stroke-width="1.1" stroke-linejoin="round"/>
<!-- pan to selection -->
<rect x="306" y="38" width="13" height="12" fill="#f3e03a" stroke="#222" stroke-width="0.8" stroke-dasharray="1.5,1"/>
<path d="M317.5,38.5 L322,43 H319.5 V47 H315.5 V43 H313 Z M317.5,60.5 L322,56 H319.5 V52 H315.5 V56 H313 Z M306,49.5 L310.5,45 V47.5 H314.5 V51.5 H310.5 V54 Z M329,49.5 L324.5,45 V47.5 H320.5 V51.5 H324.5 V54 Z" fill="#5e91cf" stroke="#3c6aa6" stroke-width="0.6"/>
<!-- zoom in selected -->
<rect x="339" y="33" width="34" height="34" fill="url(#selbg)"/><path d="M339,33 V67 M373,33 V67" stroke="#a9a9a9" stroke-width="1"/>
<g transform="translate(358.5,47)"><line x1="-6" y1="6" x2="-13" y2="13" stroke="#222" stroke-width="3.6" stroke-linecap="round"/><line x1="-7.5" y1="7.5" x2="-12.5" y2="12.5" stroke="#f0c419" stroke-width="2.2" stroke-linecap="butt"/><circle cx="0" cy="0" r="8.2" fill="url(#lens)" stroke="#777" stroke-width="1.2"/></g><path d="M353,47 H364 M358.5,41.5 V52.5" stroke="#4a7fc4" stroke-width="2.4"/>
<!-- zoom out -->
<g transform="translate(396.5,47)"><line x1="-6" y1="6" x2="-13" y2="13" stroke="#222" stroke-width="3.6" stroke-linecap="round"/><line x1="-7.5" y1="7.5" x2="-12.5" y2="12.5" stroke="#f0c419" stroke-width="2.2" stroke-linecap="butt"/><circle cx="0" cy="0" r="8.2" fill="url(#lens)" stroke="#777" stroke-width="1.2"/></g><path d="M391,47 H402" stroke="#4a7fc4" stroke-width="2.4"/>
<!-- zoom native -->
<g opacity="0.45"><g transform="translate(434.5,47)"><line x1="-6" y1="6" x2="-13" y2="13" stroke="#222" stroke-width="3.6" stroke-linecap="round"/><line x1="-7.5" y1="7.5" x2="-12.5" y2="12.5" stroke="#f0c419" stroke-width="2.2" stroke-linecap="butt"/><circle cx="0" cy="0" r="8.2" fill="url(#lens)" stroke="#777" stroke-width="1.2"/></g></g><text x="428.5" y="51" font-size="9" font-weight="bold" fill="#9a9a9a" font-family="Liberation Sans">1:1</text>
<!-- zoom full -->
<g transform="translate(471.5,48)"><line x1="-6" y1="6" x2="-13" y2="13" stroke="#222" stroke-width="3.6" stroke-linecap="round"/><line x1="-7.5" y1="7.5" x2="-12.5" y2="12.5" stroke="#f0c419" stroke-width="2.2" stroke-linecap="butt"/><circle cx="0" cy="0" r="8.2" fill="url(#lens)" stroke="#777" stroke-width="1.2"/></g>
<path d="M459,38 H466 L463.5,40.5 L467,44 L464,47 L460.5,43.5 L458.5,45.5 Z M482,38 H475 L477.5,40.5 L474,44 L477,47 L480.5,43.5 L482,45.5 Z M482,58 H475 L477.5,55.5 L474,52 L477,49 L480.5,52.5 L482,50.5 Z" fill="#5e91cf" stroke="#3c6aa6" stroke-width="0.5"/>
<!-- zoom selection -->
<rect x="497.5" y="39.5" width="8" height="15" fill="#f3e03a" stroke="#222" stroke-width="0.8" stroke-dasharray="1.5,1"/>
<g transform="translate(511.5,46.5)"><line x1="-6" y1="6" x2="-13" y2="13" stroke="#222" stroke-width="3.6" stroke-linecap="round"/><line x1="-7.5" y1="7.5" x2="-12.5" y2="12.5" stroke="#f0c419" stroke-width="2.2" stroke-linecap="butt"/><circle cx="0" cy="0" r="8.2" fill="url(#lens)" stroke="#777" stroke-width="1.2"/></g><path d="M511.5,39 A7.5,7.5 0 0 1 511.5,54 Z" fill="#efe8c8" opacity="0.8"/>
<!-- zoom layer -->
<rect x="538.5" y="42.5" width="17" height="15" fill="#d8c8d8" stroke="#9a8a9a" stroke-width="0.8"/>
<g transform="translate(549.5,46.5)"><line x1="-6" y1="6" x2="-13" y2="13" stroke="#222" stroke-width="3.6" stroke-linecap="round"/><line x1="-7.5" y1="7.5" x2="-12.5" y2="12.5" stroke="#f0c419" stroke-width="2.2" stroke-linecap="butt"/><circle cx="0" cy="0" r="8.2" fill="url(#lens)" stroke="#777" stroke-width="1.2"/></g>
<!-- zoom last -->
<g transform="translate(586.5,46.5)"><line x1="-6" y1="6" x2="-13" y2="13" stroke="#222" stroke-width="3.6" stroke-linecap="round"/><line x1="-7.5" y1="7.5" x2="-12.5" y2="12.5" stroke="#f0c419" stroke-width="2.2" stroke-linecap="butt"/><circle cx="0" cy="0" r="8.2" fill="url(#lens)" stroke="#777" stroke-width="1.2"/></g>
<rect x="585" y="51" width="11" height="10.5" fill="#4f86c8" stroke="#3a6aa8" stroke-width="0.6"/><path d="M592.5,53 L588,56.2 L592.5,59.4" fill="none" stroke="#fff" stroke-width="1.7"/>
<!-- zoom next -->
<g opacity="0.5"><g transform="translate(624.5,46.5)"><line x1="-6" y1="6" x2="-13" y2="13" stroke="#222" stroke-width="3.6" stroke-linecap="round"/><line x1="-7.5" y1="7.5" x2="-12.5" y2="12.5" stroke="#f0c419" stroke-width="2.2" stroke-linecap="butt"/><circle cx="0" cy="0" r="8.2" fill="url(#lens)" stroke="#777" stroke-width="1.2"/></g></g>
<rect x="623" y="51" width="11" height="10.5" fill="#9ab8dc" stroke="#86a6cc" stroke-width="0.6"/><path d="M626.5,53 L631,56.2 L626.5,59.4" fill="none" stroke="#fff" stroke-width="1.7"/>
<!-- refresh -->
<path d="M651.5,49 C651,42 658,38.5 664,41 L666.5,39 L668,47 L660,46 L662,44 C658.5,42.5 655,44.5 655,49 Z" fill="#4f8fd4" stroke="#3a72b8" stroke-width="0.6"/>
<path d="M668.5,50 C669,57 662,60.5 656,58 L653.5,60 L652,52 L660,53 L658,55 C661.5,56.5 665,54.5 665,50 Z" fill="#4f8fd4" stroke="#3a72b8" stroke-width="0.6"/>
<g transform="translate(687,38)"><circle cx="1" cy="1" r="1.1" fill="#fff"/><circle cx="3.5" cy="4.2" r="1.1" fill="#fff"/><circle cx="1" cy="7.4" r="1.1" fill="#fff"/><circle cx="3.5" cy="10.6" r="1.1" fill="#fff"/><circle cx="1" cy="13.8" r="1.1" fill="#fff"/><circle cx="3.5" cy="17" r="1.1" fill="#fff"/><circle cx="1" cy="20.2" r="1.1" fill="#fff"/><circle cx="3.5" cy="23.4" r="1.1" fill="#fff"/>
<circle cx="1.6" cy="1.6" r="0.7" fill="#9c9c9c"/><circle cx="4.1" cy="4.8" r="0.7" fill="#9c9c9c"/><circle cx="1.6" cy="8" r="0.7" fill="#9c9c9c"/><circle cx="4.1" cy="11.2" r="0.7" fill="#9c9c9c"/><circle cx="1.6" cy="14.4" r="0.7" fill="#9c9c9c"/><circle cx="4.1" cy="17.6" r="0.7" fill="#9c9c9c"/><circle cx="1.6" cy="20.8" r="0.7" fill="#9c9c9c"/><circle cx="4.1" cy="24" r="0.7" fill="#9c9c9c"/></g>
<!-- identify -->
<circle cx="703.5" cy="46.5" r="8" fill="#4f86c8" stroke="#3f72b0" stroke-width="0.8"/><text x="701" y="51.5" font-size="11" font-weight="bold" font-style="italic" fill="#fff" font-family="Liberation Serif">i</text>
<path d="M706,47 V59 L708.8,56.5 L711,61 L713,60 L710.8,55.6 L714.5,55.3 Z" fill="#fff" stroke="#222" stroke-width="0.8" stroke-linejoin="round"/>
<!-- action -->
<circle cx="749" cy="47.5" r="8" fill="#ececec" stroke="#a8a8a8" stroke-width="3.2" stroke-dasharray="2.4,1.8"/><circle cx="749" cy="47.5" r="7.2" fill="#eeeeee" stroke="#b4b4b4" stroke-width="0.8"/><circle cx="749" cy="47.5" r="5.5" fill="#a9c2e0" stroke="#8aa6c8" stroke-width="0.6"/><path d="M747.5,44.5 V50.5 L752,47.5 Z" fill="#fff"/>
<path d="M753,51 V61 L755.3,59 L757.2,62.5 L759,61.6 L757.2,58.3 L760.3,58 Z" fill="#fff" stroke="#888" stroke-width="0.8" stroke-linejoin="round"/>
<g transform="translate(765,52.5)"><path d="M0,0 H8 L4,7 Z" fill="#555"/></g>
<!-- select -->
<rect x="789" y="38.5" width="13.5" height="12.5" fill="#f4e24a" stroke="#bda400" stroke-width="0.6"/><rect x="805" y="38.5" width="6" height="12.5" fill="#e8e8e8" stroke="#999" stroke-width="0.8"/><rect x="789" y="54" width="13" height="7.5" fill="#e8e8e8" stroke="#999" stroke-width="0.8"/>
<path d="M797,46 V58 L799.8,55.5 L802,60 L804,59 L801.8,54.6 L805.5,54.3 Z" fill="#fff" stroke="#111" stroke-width="0.9" stroke-linejoin="round"/>
<g transform="translate(815,52.5)"><path d="M0,0 H8 L4,7 Z" fill="#555"/></g>
<!-- deselect -->
<rect x="836.5" y="41" width="14.5" height="14.5" fill="#f9e64e" stroke="#b8a000" stroke-width="0.9" stroke-dasharray="1.5,1"/>
<rect x="846" y="51" width="11" height="10.5" rx="1.5" fill="#e02a2a" stroke="#b01818" stroke-width="0.6"/><circle cx="851.5" cy="56.2" r="3.2" fill="none" stroke="#fff" stroke-width="1.1"/><path d="M849.3,58.4 L853.7,54" stroke="#fff" stroke-width="1.1"/>
<!-- expression select -->
<path d="M884,42.8 C881.5,40.2 875.5,40.3 875.3,44.3 C875.2,46.3 877,47.2 879.2,47.3 C876.2,47.4 874.2,48.8 874.4,51 C874.8,54.2 881,54.6 884.6,51.8" fill="none" stroke="#5a2f7a" stroke-width="2.1" stroke-linecap="round"/>
<rect x="882.5" y="49.5" width="12.5" height="12" fill="#f9e64e" stroke="#b8a000" stroke-width="0.9" stroke-dasharray="1.5,1"/>
<!-- attribute table -->
<rect x="911.5" y="40.5" width="19" height="19" fill="#fff" stroke="#355a7a" stroke-width="1.2"/><rect x="912" y="41" width="18" height="3.6" fill="#355a7a"/><path d="M913.5,47.5 H916.5 M918.5,47.5 H929 M913.5,50.5 H916.5 M918.5,50.5 H929 M913.5,53.5 H916.5 M918.5,53.5 H929 M913.5,56.5 H916.5 M918.5,56.5 H929" stroke="#355a7a" stroke-width="1.1"/><path d="M914,42.8 H916.5 M918.5,42.8 H928.5" stroke="#9ab8d0" stroke-width="0.9"/>
<!-- abacus -->
<path d="M948.5,39 V61 M969.5,39 V61 M947.5,61 H971 M948.5,42.5 H969.5 M948.5,48 H969.5 M948.5,54 H969.5" stroke="#888" stroke-width="1"/>
<path d="M957.5,39.8 L960,42.5 L957.5,45.2 L955,42.5 Z M963.5,39.8 L966,42.5 L963.5,45.2 L961,42.5 Z" fill="#f4c4c4" stroke="#d06060" stroke-width="0.8"/>
<path d="M953.5,45.3 L956,48 L953.5,50.7 L951,48 Z M959.5,45.3 L962,48 L959.5,50.7 L957,48 Z" fill="#cde8c8" stroke="#78b070" stroke-width="0.8"/>
<path d="M953.5,51.3 L956,54 L953.5,56.7 L951,54 Z M964.5,51.3 L967,54 L964.5,56.7 L962,54 Z" fill="#c8d8ec" stroke="#7098c0" stroke-width="0.8"/>
<!-- measure -->
<path d="M994.5,43.5 V47.5 M1011.5,43.5 V47.5 M994.5,45.5 H1011.5" stroke="#2a5276" stroke-width="1.3"/>
<rect x="992.5" y="50.5" width="21" height="7" fill="#e4e4dc" stroke="#444" stroke-width="1"/><path d="M995,50.5 V53 M997.5,50.5 V52.5 M1000,50.5 V53 M1002.5,50.5 V54 M1005,50.5 V53 M1007.5,50.5 V52.5 M1010,50.5 V53" stroke="#444" stroke-width="0.7"/>
<g transform="translate(1017,52.5)"><path d="M0,0 H8 L4,7 Z" fill="#555"/></g>
<!-- map tips -->
<path d="M1040,40.5 H1054 Q1057,40.5 1057,43.5 V51.5 Q1057,54.5 1054,54.5 H1047 L1042,58.5 L1043,54.5 H1040 Q1037,54.5 1037,51.5 V43.5 Q1037,40.5 1040,40.5 Z" fill="#f6e27a" stroke="#c9a21a" stroke-width="1"/>
<!-- new bookmark -->
<rect x="1076" y="43.5" width="16.5" height="11" fill="none" stroke="#333" stroke-width="0.9" stroke-dasharray="1.2,1.2"/><path d="M1085,45.5 V41.5 L1087.5,40.3 L1088.5,42 H1091 V45.5 Z" fill="#f2c92e" stroke="#b8920e" stroke-width="0.6"/>
<rect x="1086" y="51" width="11" height="10.5" rx="1.5" fill="#d7ae1c" stroke="#b08b12" stroke-width="0.6"/><path d="M1091.5,52.5 V60 M1088.3,54 L1094.7,58.5 M1088.3,58.5 L1094.7,54" stroke="#fff" stroke-width="1.1"/>
<!-- show bookmarks -->
<rect x="1114" y="43.5" width="16.5" height="11" fill="none" stroke="#333" stroke-width="0.9" stroke-dasharray="1.2,1.2"/><path d="M1123,45.5 V41.5 L1125.5,40.3 L1126.5,42 H1129 V45.5 Z" fill="#f2c92e" stroke="#b8920e" stroke-width="0.6"/>
<!-- text annotation -->
<path d="M1160.5,40.5 H1178.5 V56.5 H1164 L1156.5,60.5 L1160.5,56.5 Z" fill="#dde9f2" stroke="#888" stroke-width="1"/><text x="1164.5" y="52.5" font-size="11" fill="#222" font-family="Liberation Serif">T</text>
<g transform="translate(1181,52.5)"><path d="M0,0 H8 L4,7 Z" fill="#555"/></g>
<g transform="translate(1199,38)"><circle cx="1" cy="1" r="1.1" fill="#fff"/><circle cx="3.5" cy="4.2" r="1.1" fill="#fff"/><circle cx="1" cy="7.4" r="1.1" fill="#fff"/><circle cx="3.5" cy="10.6" r="1.1" fill="#fff"/><circle cx="1" cy="13.8" r="1.1" fill="#fff"/><circle cx="3.5" cy="17" r="1.1" fill="#fff"/><circle cx="1" cy="20.2" r="1.1" fill="#fff"/><circle cx="3.5" cy="23.4" r="1.1" fill="#fff"/>
<circle cx="1.6" cy="1.6" r="0.7" fill="#9c9c9c"/><circle cx="4.1" cy="4.8" r="0.7" fill="#9c9c9c"/><circle cx="1.6" cy="8" r="0.7" fill="#9c9c9c"/><circle cx="4.1" cy="11.2" r="0.7" fill="#9c9c9c"/><circle cx="1.6" cy="14.4" r="0.7" fill="#9c9c9c"/><circle cx="4.1" cy="17.6" r="0.7" fill="#9c9c9c"/><circle cx="1.6" cy="20.8" r="0.7" fill="#9c9c9c"/><circle cx="4.1" cy="24" r="0.7" fill="#9c9c9c"/></g>
<!-- help -->
<rect x="1210.5" y="39.5" width="19.5" height="20.5" rx="1" fill="#6a9bd0" stroke="#222" stroke-width="1"/><rect x="1211" y="40" width="4.5" height="19.5" fill="#2c3e50"/><text x="1219" y="54.5" font-size="12" fill="#fff" font-family="Liberation Serif">?</text>
<!-- what's this -->
<path d="M1247.5,39.5 V54 L1251,51 L1253.5,56.5 L1256,55.4 L1253.5,50 L1258,49.5 Z" fill="#fff" stroke="#222" stroke-width="0.9" stroke-linejoin="round"/><text x="1258.5" y="59" font-size="18" fill="#000" font-family="Liberation Serif">?</text>

<!-- ===== toolbar 2 ===== -->
<g transform="translate(21,74)"><circle cx="1" cy="1" r="1.1" fill="#fff"/><circle cx="3.5" cy="4.2" r="1.1" fill="#fff"/><circle cx="1" cy="7.4" r="1.1" fill="#fff"/><circle cx="3.5" cy="10.6" r="1.1" fill="#fff"/><circle cx="1" cy="13.8" r="1.1" fill="#fff"/><circle cx="3.5" cy="17" r="1.1" fill="#fff"/><circle cx="1" cy="20.2" r="1.1" fill="#fff"/><circle cx="3.5" cy="23.4" r="1.1" fill="#fff"/>
<circle cx="1.6" cy="1.6" r="0.7" fill="#9c9c9c"/><circle cx="4.1" cy="4.8" r="0.7" fill="#9c9c9c"/><circle cx="1.6" cy="8" r="0.7" fill="#9c9c9c"/><circle cx="4.1" cy="11.2" r="0.7" fill="#9c9c9c"/><circle cx="1.6" cy="14.4" r="0.7" fill="#9c9c9c"/><circle cx="4.1" cy="17.6" r="0.7" fill="#9c9c9c"/><circle cx="1.6" cy="20.8" r="0.7" fill="#9c9c9c"/><circle cx="4.1" cy="24" r="0.7" fill="#9c9c9c"/></g>
<!-- pencils -->
<g opacity="0.8"><path d="M37,91.5 L44,76.5 L47.5,78 L40.5,93 Z" fill="#e6b5a0" stroke="#b09080" stroke-width="0.6"/><path d="M37,91.5 L40.5,93 L34.5,97 Z" fill="#c8c8c8" stroke="#888" stroke-width="0.5"/><path d="M42,92 L49,77 L52.5,78.5 L45.5,93.5 Z" fill="#f0a070" stroke="#b07050" stroke-width="0.6"/><path d="M42,92 L45.5,93.5 L39.5,97.5 Z" fill="#d0d0d0" stroke="#888" stroke-width="0.5"/></g>
<path d="M50.3,93.3 H56.5 L53.4,97.3 Z" fill="#666"/>
<!-- pencil -->
<path d="M74,97.5 L75.5,91 L85.5,75 L88.5,77 L78.5,93 Z" fill="#f2df30" stroke="#7a6a10" stroke-width="0.8"/><path d="M74,97.5 L75.5,91 L78.5,93 Z" fill="#ccc" stroke="#555" stroke-width="0.6"/>
<!-- save edits (faded) -->
<g opacity="0.5"><rect x="108.5" y="75.5" width="19" height="19" rx="2" fill="#5f8fcb" stroke="#3a659c" stroke-width="1"/><rect x="111.5" y="76.5" width="13" height="7.5" fill="#f4f4f4"/><rect x="111" y="88" width="13" height="6.5" fill="#eee"/></g>
<path d="M121,96 L122,92 L127,84 L129,85.3 L124,93.3 Z" fill="#e88a50" stroke="#a06030" stroke-width="0.5" opacity="0.8"/>
<g opacity="0.62"><!-- add feature -->
<path d="M148,75 L155.5,87 L161.5,76.5 L166.5,76.5" fill="none" stroke="#5a7a8a" stroke-width="1"/><circle cx="148" cy="75" r="1.3" fill="#fff" stroke="#5a7a8a" stroke-width="0.8"/><circle cx="155.5" cy="87" r="1.3" fill="#fff" stroke="#5a7a8a" stroke-width="0.8"/><circle cx="161.5" cy="76.5" r="1.3" fill="#fff" stroke="#5a7a8a" stroke-width="0.8"/><circle cx="166.5" cy="76.5" r="1.3" fill="#fff" stroke="#5a7a8a" stroke-width="0.8"/>
<rect x="158" y="87" width="11" height="10.5" rx="1.5" fill="#d9bf60" stroke="#c0a040" stroke-width="0.6"/><path d="M163.5,88.5 V96 M160.3,90 L166.7,94.5 M160.3,94.5 L166.7,90" stroke="#fff" stroke-width="1.1"/>
<!-- move feature -->
<path d="M185,79 C185,75 190,75.5 194,76.5 C198,77.5 202,75.5 204.5,78 C206.5,80.5 205,84.5 201,85.5 C196,86.5 190,87 187,85.5 C185,84.5 185,82 185,79 Z" fill="#c4dcc0" stroke="#888" stroke-width="1"/>
<rect x="196" y="87" width="11" height="10.5" fill="#6f96c8" stroke="#5078b0" stroke-width="0.6"/><path d="M198,90.5 H202 V88.5 L205.5,92.2 L202,96 V94 H198 Z" fill="#fff"/>
<!-- node tool -->
<path d="M224,96 L230,82 M230,80 H242.5" stroke="#777" stroke-width="0.9"/><circle cx="230" cy="80.5" r="2.2" fill="#b8dcb8" stroke="#7a9a7a" stroke-width="0.6"/>
<path d="M234,95 L242,86 M232,87 L240,95" stroke="#d9a060" stroke-width="2.2" stroke-linecap="round"/>
<!-- delete selected -->
<rect x="262.5" y="77" width="14.5" height="14.5" fill="#f0e79a" stroke="#c8b840" stroke-width="0.9" stroke-dasharray="1.5,1"/>
<rect x="273.2" y="88" width="9.8" height="9.8" rx="1.5" fill="#e07070" stroke="#c05050" stroke-width="0.6"/><path d="M275.5,90.3 L280.7,95.5 M280.7,90.3 L275.5,95.5" stroke="#fff" stroke-width="1.4"/>
<!-- scissors -->
<path d="M297.5,79.5 L310,87.5 M297.5,86 L310,86" stroke="#999" stroke-width="1"/><ellipse cx="316" cy="83" rx="4" ry="2.3" fill="none" stroke="#d07070" stroke-width="1.4" transform="rotate(-20 316 83)"/><ellipse cx="316" cy="91" rx="4" ry="2.3" fill="none" stroke="#d07070" stroke-width="1.4" transform="rotate(25 316 91)"/>
<!-- copy -->
<path d="M344.5,77.5 H351 L354.5,81 V91 H344.5 Z" fill="#f2f2f2" stroke="#aaa" stroke-width="0.8"/><path d="M338.5,80.5 H345 L348.5,84 V94.5 H338.5 Z" fill="#f4f4f4" stroke="#999" stroke-width="0.8"/><path d="M340.5,86 H346.5 M340.5,88 H346.5 M340.5,90 H346.5 M340.5,92 H346.5" stroke="#bbb" stroke-width="0.6"/>
</g><!-- paste -->
<rect x="377.5" y="76.5" width="15.5" height="19" fill="#f2e6d8" stroke="#d8b890" stroke-width="0.9"/><rect x="381.5" y="75.5" width="7" height="3" rx="1" fill="#f2e6d8" stroke="#c8a880" stroke-width="0.8"/><path d="M380,80 H388 L390.5,82.5 V93.5 H380 Z" fill="#fafafa" stroke="#aaa" stroke-width="0.6"/><path d="M382,85 H389 M382,87 H389 M382,89 H389 M382,91 H389" stroke="#999" stroke-width="0.6"/>
<g transform="translate(412,74)"><circle cx="1" cy="1" r="1.1" fill="#fff"/><circle cx="3.5" cy="4.2" r="1.1" fill="#fff"/><circle cx="1" cy="7.4" r="1.1" fill="#fff"/><circle cx="3.5" cy="10.6" r="1.1" fill="#fff"/><circle cx="1" cy="13.8" r="1.1" fill="#fff"/><circle cx="3.5" cy="17" r="1.1" fill="#fff"/><circle cx="1" cy="20.2" r="1.1" fill="#fff"/><circle cx="3.5" cy="23.4" r="1.1" fill="#fff"/>
<circle cx="1.6" cy="1.6" r="0.7" fill="#9c9c9c"/><circle cx="4.1" cy="4.8" r="0.7" fill="#9c9c9c"/><circle cx="1.6" cy="8" r="0.7" fill="#9c9c9c"/><circle cx="4.1" cy="11.2" r="0.7" fill="#9c9c9c"/><circle cx="1.6" cy="14.4" r="0.7" fill="#9c9c9c"/><circle cx="4.1" cy="17.6" r="0.7" fill="#9c9c9c"/><circle cx="1.6" cy="20.8" r="0.7" fill="#9c9c9c"/><circle cx="4.1" cy="24" r="0.7" fill="#9c9c9c"/></g>
<!-- abc -->
<g transform="translate(420,78.2)"><path d="M4,0 H21 V10.5 H4 L0,5.25 Z" fill="#f7dc4a" stroke="#c9a21a" stroke-width="1"/></g><text x="424.5" y="86.7" font-size="9" font-weight="bold" fill="#111" font-family="Liberation Sans">abc</text>
<!-- pin labels (checked) -->
<rect x="458.5" y="78.5" width="23" height="17" fill="#d8e4f0" stroke="#7aa6e0" stroke-width="1"/><g transform="translate(460,78.2)"><path d="M4,0 H21 V10.5 H4 L0,5.25 Z" fill="#f7dc4a" stroke="#c9a21a" stroke-width="1"/></g><text x="464.5" y="86.2" font-size="8" font-weight="bold" fill="#222" font-family="Liberation Sans">ab</text>
<path d="M475,82 V91" stroke="#ddd" stroke-width="1.5"/><circle cx="476.5" cy="91.8" r="4.3" fill="#c02020"/>
<!-- pin faded -->
<g opacity="0.6"><g transform="translate(496,78.2)"><path d="M4,0 H21 V10.5 H4 L0,5.25 Z" fill="#f7dc4a" stroke="#c9a21a" stroke-width="1"/></g><text x="500.5" y="86.2" font-size="8" font-weight="bold" fill="#333" font-family="Liberation Sans">ab</text><circle cx="514.8" cy="92" r="4.6" fill="#b03030"/></g>
<g opacity="0.62"><!-- show/hide -->
<g><g transform="translate(534,78.2)"><path d="M4,0 H21 V10.5 H4 L0,5.25 Z" fill="#f7dc4a" stroke="#c9a21a" stroke-width="1"/></g><text x="538.5" y="86.7" font-size="9" font-weight="bold" fill="#333" font-family="Liberation Sans">abc</text></g>
<path d="M542,93.3 Q549.5,86.5 557.5,93.3 Q549.5,100 542,93.3 Z" fill="#fff" stroke="#777" stroke-width="0.8"/><circle cx="549.5" cy="93.3" r="2.6" fill="#6f9fd8"/><circle cx="549.5" cy="93.3" r="1" fill="#333"/>
<!-- move label -->
<g><g transform="translate(572,78.2)"><path d="M4,0 H21 V10.5 H4 L0,5.25 Z" fill="#f7dc4a" stroke="#c9a21a" stroke-width="1"/></g><text x="576.5" y="86.7" font-size="9" font-weight="bold" fill="#333" font-family="Liberation Sans">abc</text></g>
<rect x="585" y="87" width="11" height="10.5" fill="#7aa0cc" stroke="#6088b8" stroke-width="0.6"/><path d="M587,90.5 H591 V88.5 L594.5,92.2 L591,96 V94 H587 Z" fill="#fff"/>
<!-- rotate label -->
<g><g transform="translate(610,78.2)"><path d="M4,0 H21 V10.5 H4 L0,5.25 Z" fill="#f7dc4a" stroke="#c9a21a" stroke-width="1"/></g><text x="614.5" y="86.7" font-size="9" font-weight="bold" fill="#333" font-family="Liberation Sans">abc</text></g>
<rect x="623" y="87" width="11" height="10.5" fill="#7aa0cc" stroke="#6088b8" stroke-width="0.6"/><circle cx="628.5" cy="92.2" r="2.8" fill="none" stroke="#fff" stroke-width="1.2"/>
<!-- change label -->
<g><g transform="translate(648,78.2)"><path d="M4,0 H21 V10.5 H4 L0,5.25 Z" fill="#f7dc4a" stroke="#c9a21a" stroke-width="1"/></g><text x="652.5" y="86.7" font-size="9" font-weight="bold" fill="#333" font-family="Liberation Sans">abc</text></g>
<rect x="661" y="87" width="11" height="10.5" fill="#dcc060" stroke="#c0a040" stroke-width="0.6"/><path d="M663.5,95.5 L670,89" stroke="#fff" stroke-width="1.6"/>
</g><g transform="translate(687,74)"><circle cx="1" cy="1" r="1.1" fill="#fff"/><circle cx="3.5" cy="4.2" r="1.1" fill="#fff"/><circle cx="1" cy="7.4" r="1.1" fill="#fff"/><circle cx="3.5" cy="10.6" r="1.1" fill="#fff"/><circle cx="1" cy="13.8" r="1.1" fill="#fff"/><circle cx="3.5" cy="17" r="1.1" fill="#fff"/><circle cx="1" cy="20.2" r="1.1" fill="#fff"/><circle cx="3.5" cy="23.4" r="1.1" fill="#fff"/>
<circle cx="1.6" cy="1.6" r="0.7" fill="#9c9c9c"/><circle cx="4.1" cy="4.8" r="0.7" fill="#9c9c9c"/><circle cx="1.6" cy="8" r="0.7" fill="#9c9c9c"/><circle cx="4.1" cy="11.2" r="0.7" fill="#9c9c9c"/><circle cx="1.6" cy="14.4" r="0.7" fill="#9c9c9c"/><circle cx="4.1" cy="17.6" r="0.7" fill="#9c9c9c"/><circle cx="1.6" cy="20.8" r="0.7" fill="#9c9c9c"/><circle cx="4.1" cy="24" r="0.7" fill="#9c9c9c"/></g><g transform="translate(700,74)"><circle cx="1" cy="1" r="1.1" fill="#fff"/><circle cx="3.5" cy="4.2" r="1.1" fill="#fff"/><circle cx="1" cy="7.4" r="1.1" fill="#fff"/><circle cx="3.5" cy="10.6" r="1.1" fill="#fff"/><circle cx="1" cy="13.8" r="1.1" fill="#fff"/><circle cx="3.5" cy="17" r="1.1" fill="#fff"/><circle cx="1" cy="20.2" r="1.1" fill="#fff"/><circle cx="3.5" cy="23.4" r="1.1" fill="#fff"/>
<circle cx="1.6" cy="1.6" r="0.7" fill="#9c9c9c"/><circle cx="4.1" cy="4.8" r="0.7" fill="#9c9c9c"/><circle cx="1.6" cy="8" r="0.7" fill="#9c9c9c"/><circle cx="4.1" cy="11.2" r="0.7" fill="#9c9c9c"/><circle cx="1.6" cy="14.4" r="0.7" fill="#9c9c9c"/><circle cx="4.1" cy="17.6" r="0.7" fill="#9c9c9c"/><circle cx="1.6" cy="20.8" r="0.7" fill="#9c9c9c"/><circle cx="4.1" cy="24" r="0.7" fill="#9c9c9c"/></g>
</svg>

<!-- layers panel -->
<div class="a" style="left:62px;top:104px;width:294px;height:697px;background:#ececec"></div>
<div class="a" style="left:356px;top:104px;width:1px;height:1047px;background:#a9a9a9"></div>
<div class="a hdr" style="left:62px;top:104px;width:294px;height:26px"></div>
<svg class="a" style="left:62px;top:104px" width="40" height="26"><g><circle cx="10" cy="12" r="6.6" fill="#505050" stroke="#363636" stroke-width="0.9"/><path d="M7.6,9.6 L12.4,14.4 M12.4,9.6 L7.6,14.4" stroke="#fff" stroke-width="2" stroke-linecap="round"/><circle cx="30" cy="12" r="6.6" fill="#505050" stroke="#363636" stroke-width="0.9"/><rect x="28.5" y="8.8" width="4.5" height="3.8" fill="none" stroke="#fff" stroke-width="1"/><rect x="26.8" y="11" width="4.6" height="3.8" fill="#505050" stroke="#fff" stroke-width="1"/></g></svg>
<div class="t" style="left:211.5px;top:109.5px;font-size:12px;letter-spacing:-0.1px">Layers</div>
<div class="a" style="left:62px;top:130px;width:1px;height:649px;background:#a4a4a4"></div>
<div class="a" style="left:63px;top:131px;width:293px;height:648px;background:#fff"></div>
<div class="a" style="left:63px;top:169px;width:293px;height:20px;background:#d4d4d4"></div>
<svg class="a" style="left:63px;top:131px" width="140" height="75">
 <path d="M6,7 H15 L10.5,14 Z" fill="#7a7a7a"/><path d="M6,45 H15 L10.5,52 Z" fill="#7a7a7a"/>
 <rect x="27.5" y="3.5" width="13" height="13" rx="2" fill="#f6f6f6" stroke="#c4c4c4"/><path d="M30,9.5 L33,13 L39,3" fill="none" stroke="#8a8a8a" stroke-width="1.8"/>
 <rect x="27.5" y="41.5" width="13" height="13" rx="2" fill="#f6f6f6" stroke="#b4b4b4"/><path d="M30,47.5 L33,51 L39,41" fill="none" stroke="#555" stroke-width="1.8"/>
 <path d="M55,6 C56,3 60,4 63,5 C66,6 68,3 70,5 C71.5,7 70,10 69,11 C66,10 63,12 60,13 C57,14 54,13 54.5,10 Z" fill="#f4f4f4" stroke="#9a9a9a" stroke-width="1"/>
 <path d="M55,44 L59,53.5 L63,42.5 L66,42.5 L69,42" fill="none" stroke="#9aa6b0" stroke-width="0.9"/><circle cx="55" cy="44" r="1" fill="#fff" stroke="#9aa6b0" stroke-width="0.7"/><circle cx="59" cy="53.5" r="1" fill="#fff" stroke="#9aa6b0" stroke-width="0.7"/><circle cx="63.5" cy="42.5" r="1" fill="#fff" stroke="#9aa6b0" stroke-width="0.7"/><circle cx="68.5" cy="42" r="1" fill="#fff" stroke="#9aa6b0" stroke-width="0.7"/>
 <rect x="45.5" y="21.5" width="14" height="14" fill="#a1258f" stroke="#4a1040" stroke-width="1"/>
 <rect x="45" y="67" width="16" height="1.3" fill="#3c9573"/>
</svg>
<div class="t" style="left:139px;top:133.5px;font-weight:bold;letter-spacing:0.42px">restaurants_34S</div>
<div class="t" style="left:139px;top:171.5px;font-weight:bold;letter-spacing:0.36px;text-decoration:underline;text-underline-offset:1px">roads_34S</div>
<!-- tab bar -->
<div class="a" style="left:63px;top:779px;width:293px;height:1px;background:#a8a8a8"></div>
<div class="a" style="left:63px;top:780px;width:292px;height:10px;background:#e2e2e2;border-radius:0 0 5px 5px;border-bottom:1px solid #d2d2d2"></div>
<div class="a" style="left:142px;top:780px;width:134px;height:20px;box-sizing:border-box;border:1px solid #9a9a9a;border-radius:4px;background:#fff;overflow:hidden">
 <div class="a" style="left:0;top:0;width:62px;height:20px;background:linear-gradient(#7e7e7e,#8e8e8e);border-right:1px solid #6a6a6a"></div>
 <div class="t" style="left:9.5px;top:2.5px;color:#fff;letter-spacing:0px">Layers</div>
 <div class="t" style="left:74.5px;top:2.5px;letter-spacing:0.2px">Browser</div>
</div>
<div class="a" style="left:62px;top:801px;width:294px;height:1px;background:#b4b4b4"></div>
<!-- shortest path panel -->
<div class="a" style="left:62px;top:802px;width:294px;height:349px;background:#ececec"></div>
<div class="a hdr" style="left:62px;top:802px;width:294px;height:25px"></div>
<svg class="a" style="left:62px;top:802px" width="40" height="26"><g><circle cx="10" cy="12" r="6.6" fill="#505050" stroke="#363636" stroke-width="0.9"/><path d="M7.6,9.6 L12.4,14.4 M12.4,9.6 L7.6,14.4" stroke="#fff" stroke-width="2" stroke-linecap="round"/><circle cx="30" cy="12" r="6.6" fill="#505050" stroke="#363636" stroke-width="0.9"/><rect x="28.5" y="8.8" width="4.5" height="3.8" fill="none" stroke="#fff" stroke-width="1"/><rect x="26.8" y="11" width="4.6" height="3.8" fill="#505050" stroke="#fff" stroke-width="1"/></g></svg>
<div class="t" style="left:192.5px;top:807.5px;font-size:12px">Shortest path</div>
<div class="t" style="left:74px;top:841px;letter-spacing:0.25px">Start</div>
<div class="inp" style="left:74px;top:866px;width:234px;height:21px"></div>
<div class="t" style="left:77px;top:870px;letter-spacing:0.85px">(446970,6.23356e+06)</div>
<div class="a" style="left:318px;top:864px;width:26px;height:26px;box-sizing:border-box;border:1px solid #c4c4c4;background:#f0f0f0"></div>
<svg class="a" style="left:318px;top:864px" width="26" height="26"><path d="M13,5 V21 M5,13 H21" stroke="#3f86c8" stroke-width="1"/><path d="M10.5,5 H15.5 L13,9.5 Z M10.5,21 H15.5 L13,16.5 Z M5,10.5 V15.5 L9.5,13 Z M21,10.5 V15.5 L16.5,13 Z" fill="#3f86c8"/><circle cx="13" cy="13" r="1.9" fill="#e02020"/></svg>
<div class="t" style="left:74px;top:900.5px;letter-spacing:0.25px">Stop</div>
<div class="inp" style="left:74px;top:926px;width:234px;height:21px"></div>
<div class="t" style="left:77px;top:930px;letter-spacing:0.8px">(449696,6.2355e+06)</div>
<div class="a" style="left:318px;top:924px;width:26px;height:26px;box-sizing:border-box;border:1px solid #c4c4c4;background:#f0f0f0"></div>
<svg class="a" style="left:318px;top:924px" width="26" height="26"><path d="M13,5 V21 M5,13 H21" stroke="#3f86c8" stroke-width="1"/><path d="M10.5,5 H15.5 L13,9.5 Z M10.5,21 H15.5 L13,16.5 Z M5,10.5 V15.5 L9.5,13 Z M21,10.5 V15.5 L16.5,13 Z" fill="#3f86c8"/><circle cx="13" cy="13" r="1.9" fill="#e02020"/></svg>
<div class="t" style="left:74px;top:965px;letter-spacing:0.55px">Criterion</div>
<div class="btn" style="left:211px;top:963px;width:130px;height:21px;text-align:left"></div>
<div class="t" style="left:220.5px;top:965px;letter-spacing:0.3px">Length</div>
<svg class="a" style="left:326px;top:965px" width="10" height="16"><path d="M2,6 H8 L5,2 Z M2,10 H8 L5,14 Z" fill="#333"/></svg>
<div class="t" style="left:74px;top:999.5px;letter-spacing:0.4px">Length</div>
<div class="inp" style="left:126px;top:996px;width:218px;height:21px"></div>
<div class="t" style="left:129.5px;top:1000px;letter-spacing:0.82px">3.88109km</div>
<div class="t" style="left:74px;top:1030px;letter-spacing:0.5px">Time</div>
<div class="inp" style="left:114px;top:1027px;width:230px;height:21px"></div>
<div class="t" style="left:117px;top:1030.5px;letter-spacing:0.77px">0.0646606h</div>
<div class="btn" style="left:80px;top:1066px;width:88px;height:21px"></div>
<div class="t" style="left:95.5px;top:1069.5px;letter-spacing:0.3px">Calculate</div>
<div class="btn" style="left:182px;top:1066px;width:72px;height:21px"></div>
<div class="t" style="left:197.5px;top:1069.5px;letter-spacing:0.45px">Export</div>
<div class="btn" style="left:268px;top:1066px;width:70px;height:21px"></div>
<div class="t" style="left:286.8px;top:1069.5px;letter-spacing:0.2px">Clear</div>
<div class="btn" style="left:80px;top:1112px;width:258px;height:21px"></div>
<svg class="a" style="left:182px;top:1113px" width="20" height="20"><rect x="3" y="3" width="13" height="13" rx="3" fill="#e4e4e4"/><circle cx="9.5" cy="9.5" r="4.2" fill="#f4f4f4"/><path d="M2.5,2.5 L6.5,6.5 M16.5,2.5 L12.5,6.5 M2.5,16.5 L6.5,12.5 M16.5,16.5 L12.5,12.5" stroke="#e83c3c" stroke-width="2.6" stroke-linecap="round"/><circle cx="3" cy="3" r="1.6" fill="#fff" stroke="#d03030" stroke-width="0.8"/><circle cx="16" cy="3" r="1.6" fill="#fff" stroke="#d03030" stroke-width="0.8"/><circle cx="3" cy="16" r="1.6" fill="#fff" stroke="#d03030" stroke-width="0.8"/><circle cx="16" cy="16" r="1.6" fill="#fff" stroke="#d03030" stroke-width="0.8"/></svg>
<div class="t" style="left:205.5px;top:1115.5px;letter-spacing:0.25px">Help</div>
<!-- status bar -->
<div class="t" style="left:20.5px;top:1161px;letter-spacing:0.39px">0 feature(s) selected on layer roads_34S.</div>
<div class="a" style="left:1143px;top:1158px;width:20px;height:20px;box-sizing:border-box;border:1px solid #bcbcbc;background:#e6e6e6"></div>
<svg class="a" style="left:1143px;top:1158px" width="20" height="20"><circle cx="10" cy="11" r="5" fill="none" stroke="#333" stroke-width="1.4"/><circle cx="10.5" cy="13" r="2" fill="#555"/><path d="M5,5 C8,3 11,4 12,7 M14,4 L16,3" stroke="#222" stroke-width="1.2" fill="none"/></svg>
<div class="t" style="left:1172px;top:1160.5px;letter-spacing:0.53px">Coordinate:</div>
<div class="inp" style="left:1255px;top:1158px;width:300px;height:20px;border-color:#a6a6a6"></div>
<div class="t" style="left:1349px;top:1160.5px;letter-spacing:0.85px">448559,6231867</div>
<div class="t" style="left:1564px;top:1160.5px;letter-spacing:-0.2px">Scale</div>
<div class="a" style="left:1609px;top:1162px;width:93px;height:15px;box-sizing:border-box;border:1px solid #a0a0a0;border-radius:0 3px 3px 0;background:#fff"></div>
<div class="a" style="left:1688px;top:1163px;width:1px;height:13px;background:#c8c8c8"></div>
<svg class="a" style="left:1689px;top:1163px" width="12" height="13"><path d="M3,5 H9 L6,9 Z" fill="#444"/></svg>
<div class="t" style="left:1611px;top:1162.3px;letter-spacing:0.8px">1:14074</div>
<div class="a" style="left:1709px;top:1158px;width:20px;height:20px;box-sizing:border-box;border:1px solid #c0c0c0;background:#e8e8e8"></div>
<svg class="a" style="left:1709px;top:1158px" width="20" height="20"><path d="M4,16 C9,14 13,9 16,4" stroke="#777" stroke-width="3" fill="none" stroke-linecap="round"/><circle cx="7.5" cy="6" r="3.2" fill="none" stroke="#e02828" stroke-width="1.2"/><path d="M5.2,8.3 L9.8,3.7" stroke="#e02828" stroke-width="1.2"/></svg>
<svg class="a" style="left:1735px;top:1157px" width="16" height="20"><rect x="0.5" y="5.5" width="13" height="13" rx="2" fill="#f6f6f6" stroke="#9a9a9a"/><path d="M3,11.5 L6,15.5 L13,2" fill="none" stroke="#222" stroke-width="2"/></svg>
<div class="t" style="left:1753px;top:1160.5px;letter-spacing:0.15px">Render</div>
<div class="t" style="left:1803px;top:1160.5px;color:#3a3a4a">EPSG:32734</div>
<div class="a" style="left:1888px;top:1158px;width:20px;height:20px;box-sizing:border-box;border:1px solid #c0c0c0;background:#e8e8e8"></div>
<svg class="a" style="left:1888px;top:1158px" width="20" height="20"><circle cx="10" cy="10" r="6" fill="none" stroke="#666" stroke-width="1.4"/><ellipse cx="10" cy="10" rx="2.5" ry="6" fill="none" stroke="#666" stroke-width="1"/><path d="M4,10 H16" stroke="#666" stroke-width="1"/></svg>
<svg class="a" style="left:1918px;top:1166px" width="16" height="18"><path d="M3,17 L15,5 M7,17 L15,9 M11,17 L15,13" stroke="#9a9a9a" stroke-width="1"/></svg>
<svg class="a" style="left:14px;top:104px" width="48" height="1047" viewBox="14 104 48 1047">
<defs>


<radialGradient id="glb" cx="0.4" cy="0.35" r="0.7"><stop offset="0" stop-color="#c6dcf2"/><stop offset="1" stop-color="#6e9ccc"/></radialGradient>
</defs>
<rect x="61" y="104" width="1" height="1047" fill="#b8b8b8"/>
<g transform="translate(21.5,112)"><circle cx="1" cy="1" r="1" fill="#fff"/><circle cx="5" cy="2.5" r="1" fill="#fff"/><circle cx="9" cy="1" r="1" fill="#fff"/><circle cx="13" cy="2.5" r="1" fill="#fff"/><circle cx="17" cy="1" r="1" fill="#fff"/><circle cx="21" cy="2.5" r="1" fill="#fff"/><circle cx="25" cy="1" r="1" fill="#fff"/><circle cx="29" cy="2.5" r="1" fill="#fff"/><circle cx="33" cy="1" r="1" fill="#fff"/>
<circle cx="1.6" cy="1.6" r="0.65" fill="#a0a0a0"/><circle cx="5.6" cy="3.1" r="0.65" fill="#a0a0a0"/><circle cx="9.6" cy="1.6" r="0.65" fill="#a0a0a0"/><circle cx="13.6" cy="3.1" r="0.65" fill="#a0a0a0"/><circle cx="17.6" cy="1.6" r="0.65" fill="#a0a0a0"/><circle cx="21.6" cy="3.1" r="0.65" fill="#a0a0a0"/><circle cx="25.6" cy="1.6" r="0.65" fill="#a0a0a0"/><circle cx="29.6" cy="3.1" r="0.65" fill="#a0a0a0"/><circle cx="33.6" cy="1.6" r="0.65" fill="#a0a0a0"/></g>
<!-- add vector -->
<path d="M27,123 L33,138 L38,123 L44,123" fill="none" stroke="#3a5a78" stroke-width="1.3"/><circle cx="27" cy="123" r="1.8" fill="#fff" stroke="#3a5a78" stroke-width="1"/><circle cx="33" cy="138" r="1.8" fill="#fff" stroke="#3a5a78" stroke-width="1"/><circle cx="38.5" cy="123" r="1.8" fill="#fff" stroke="#3a5a78" stroke-width="1"/><circle cx="44.5" cy="123" r="1.8" fill="#fff" stroke="#3a5a78" stroke-width="1"/>
<g transform="translate(40.3,135)"><rect x="0" y="0" width="9.5" height="9.5" rx="1.5" fill="#4b9a50" stroke="#2f7a36" stroke-width="0.6"/><path d="M4.75,1.8 V7.7 M1.8,4.75 H7.7" stroke="#fff" stroke-width="1.8"/></g>
<!-- raster -->
<rect x="26" y="159" width="19.5" height="19.5" fill="#7aa4d4"/><path d="M26,159 h6.5 v6.5 h-6.5 Z M39,159 h6.5 v6.5 h-6.5 Z M32.5,165.5 h6.5 v6.5 h-6.5 Z M26,172 h6.5 v6.5 h-6.5 Z" fill="#1e3a5e"/>
<g transform="translate(40.3,173.5)"><rect x="0" y="0" width="9.5" height="9.5" rx="1.5" fill="#4b9a50" stroke="#2f7a36" stroke-width="0.6"/><path d="M4.75,1.8 V7.7 M1.8,4.75 H7.7" stroke="#fff" stroke-width="1.8"/></g>
<!-- postgis -->
<path d="M27,200 C26,196 30,195.5 34,196.5 C38,195 44,196 44,200.5 C44,204 41,205 40,208 C39.5,211 41,213 40,214.5 C38,215 36.5,213 36.5,210 C35,208.5 33,208.5 31,208.5 C29.5,208 28.5,206 28,204 C27.5,202.5 27,201.5 27,200 Z" fill="#5a8ac4" stroke="#1e3a5e" stroke-width="1.1"/>
<path d="M33,200 C32,203 33,206 34.5,207" fill="none" stroke="#1e3a5e" stroke-width="0.9"/>
<g transform="translate(40.3,212)"><rect x="0" y="0" width="9.5" height="9.5" rx="1.5" fill="#4b9a50" stroke="#2f7a36" stroke-width="0.6"/><path d="M4.75,1.8 V7.7 M1.8,4.75 H7.7" stroke="#fff" stroke-width="1.8"/></g>
<!-- spatialite -->
<path d="M26,258 C28,250 33,242 40,238 C44,235.5 48,235 49,234.5 C48,240 45,246 39,250.5 C35,253.5 30,254.5 27.5,256 Z" fill="#a8c8ec" stroke="#2a4a6e" stroke-width="1"/><path d="M26,258 C31,250 38,243 47,236.5" fill="none" stroke="#2a4a6e" stroke-width="0.9"/>
<g transform="translate(40.3,250)"><rect x="0" y="0" width="9.5" height="9.5" rx="1.5" fill="#4b9a50" stroke="#2f7a36" stroke-width="0.6"/><path d="M4.75,1.8 V7.7 M1.8,4.75 H7.7" stroke="#fff" stroke-width="1.8"/></g>
<!-- mssql -->
<path d="M26,273.5 C34,274 43,277 48.5,285 C44,287 38,289 26,294 C30,287 30,280 26,273.5 Z" fill="#6a9ad0" stroke="#1e3a5e" stroke-width="1"/><path d="M31,274.5 C34,280 34,286 32,291.5 M36.5,276 C39,281 39,285 37.5,289.5 M42,279 C43.5,282 43.5,285 42.5,287.5" fill="none" stroke="#1e3a5e" stroke-width="0.9"/>
<g transform="translate(40.3,288)"><rect x="0" y="0" width="9.5" height="9.5" rx="1.5" fill="#4b9a50" stroke="#2f7a36" stroke-width="0.6"/><path d="M4.75,1.8 V7.7 M1.8,4.75 H7.7" stroke="#fff" stroke-width="1.8"/></g>
<!-- wms -->
<circle cx="37.5" cy="321" r="11" fill="url(#glb)" stroke="#4e7cb0" stroke-width="1"/><path d="M26.5,321 H48.5 M37.5,310 V332 M28.5,315 H46.5 M28.5,327 H46.5" stroke="#e8f0fa" stroke-width="0.7"/><path d="M31,315 h4 v4 h-3 Z M38,314 h5 v3 h-4 Z M34,322 h4 v5 h-3 Z M41,320 h3 v4 h-3 Z" fill="#2a4a70"/>
<g transform="translate(40.3,325.5)"><rect x="0" y="0" width="9.5" height="9.5" rx="1.5" fill="#4b9a50" stroke="#2f7a36" stroke-width="0.6"/><path d="M4.75,1.8 V7.7 M1.8,4.75 H7.7" stroke="#fff" stroke-width="1.8"/></g>
<!-- wcs -->
<circle cx="37.5" cy="359" r="11" fill="#5b87be" stroke="#1a2e48" stroke-width="1.8"/><path d="M26.5,359 H48.5 M28.5,353 H46.5 M28.5,365 H46.5" stroke="#fff" stroke-width="1"/><ellipse cx="37.5" cy="359" rx="5" ry="11" fill="none" stroke="#fff" stroke-width="1"/>
<g transform="translate(40.3,364)"><rect x="0" y="0" width="9.5" height="9.5" rx="1.5" fill="#4b9a50" stroke="#2f7a36" stroke-width="0.6"/><path d="M4.75,1.8 V7.7 M1.8,4.75 H7.7" stroke="#fff" stroke-width="1.8"/></g>
<!-- wfs -->
<circle cx="37.5" cy="396.5" r="11" fill="#d6e6f6" stroke="#6a96cc" stroke-width="1"/><path d="M26.5,396.5 H48.5 M28.5,390.5 H46.5 M28.5,402.5 H46.5" stroke="#8ab0da" stroke-width="0.8"/><ellipse cx="37.5" cy="396.5" rx="5" ry="11" fill="none" stroke="#8ab0da" stroke-width="0.8"/>
<path d="M30,391 L35,404 L40,391 L44,391" fill="none" stroke="#222" stroke-width="1"/><circle cx="30" cy="391" r="1.4" fill="#fff" stroke="#222" stroke-width="0.8"/><circle cx="35" cy="404" r="1.4" fill="#fff" stroke="#222" stroke-width="0.8"/><circle cx="40" cy="391" r="1.4" fill="#fff" stroke="#222" stroke-width="0.8"/><circle cx="44" cy="391" r="1.4" fill="#fff" stroke="#222" stroke-width="0.8"/>
<g transform="translate(40.3,401.5)"><rect x="0" y="0" width="9.5" height="9.5" rx="1.5" fill="#4b9a50" stroke="#2f7a36" stroke-width="0.6"/><path d="M4.75,1.8 V7.7 M1.8,4.75 H7.7" stroke="#fff" stroke-width="1.8"/></g>
<!-- delimited text -->
<path d="M33,428.5 C37,427 41,429 40.5,432.5 C40,437 35,441 30.5,443 L30,442 C33,440 35,437.5 35.5,435.5 C32.5,435.5 31,433.5 31,432 C31,430 32,429 33,428.5 Z" fill="#4a7ab8" stroke="#2a4a70" stroke-width="0.8"/>
<g transform="translate(40.3,439)"><rect x="0" y="0" width="9.5" height="9.5" rx="1.5" fill="#4b9a50" stroke="#2f7a36" stroke-width="0.6"/><path d="M4.75,1.8 V7.7 M1.8,4.75 H7.7" stroke="#fff" stroke-width="1.8"/></g>
<!-- new shapefile -->
<path d="M28,465.5 L34.5,480 L40,465.5 L45,465.5" fill="none" stroke="#3a5a78" stroke-width="1.3"/><circle cx="28" cy="465.5" r="1.8" fill="#fff" stroke="#3a5a78" stroke-width="1"/><circle cx="34.5" cy="480" r="1.8" fill="#fff" stroke="#3a5a78" stroke-width="1"/><circle cx="40.5" cy="465.5" r="1.8" fill="#fff" stroke="#3a5a78" stroke-width="1"/><circle cx="45.5" cy="465.5" r="1.8" fill="#fff" stroke="#3a5a78" stroke-width="1"/>
<rect x="40.8" y="477.3" width="9" height="9.3" rx="1.3" fill="#d7ae1c" stroke="#b08b12" stroke-width="0.6"/><path d="M45.3,478.8 V485.3 M42.3,480 L48.3,484 M42.3,484 L48.3,480" stroke="#fff" stroke-width="1"/>
<path d="M52,476.5 H60 L56,483.5 Z" fill="#555"/>
<!-- remove layer -->
<rect x="27" y="503" width="19.5" height="19" fill="#f2f2f2" stroke="#777" stroke-width="1"/>
<rect x="40.8" y="515.5" width="9" height="8.5" rx="1.5" fill="#e84848" stroke="#c02a2a" stroke-width="0.6"/><path d="M42.8,519.8 H47.8" stroke="#fff" stroke-width="1.8"/>
<g transform="translate(21.5,538.5)"><circle cx="1" cy="1" r="1" fill="#fff"/><circle cx="5" cy="2.5" r="1" fill="#fff"/><circle cx="9" cy="1" r="1" fill="#fff"/><circle cx="13" cy="2.5" r="1" fill="#fff"/><circle cx="17" cy="1" r="1" fill="#fff"/><circle cx="21" cy="2.5" r="1" fill="#fff"/><circle cx="25" cy="1" r="1" fill="#fff"/><circle cx="29" cy="2.5" r="1" fill="#fff"/><circle cx="33" cy="1" r="1" fill="#fff"/>
<circle cx="1.6" cy="1.6" r="0.65" fill="#a0a0a0"/><circle cx="5.6" cy="3.1" r="0.65" fill="#a0a0a0"/><circle cx="9.6" cy="1.6" r="0.65" fill="#a0a0a0"/><circle cx="13.6" cy="3.1" r="0.65" fill="#a0a0a0"/><circle cx="17.6" cy="1.6" r="0.65" fill="#a0a0a0"/><circle cx="21.6" cy="3.1" r="0.65" fill="#a0a0a0"/><circle cx="25.6" cy="1.6" r="0.65" fill="#a0a0a0"/><circle cx="29.6" cy="3.1" r="0.65" fill="#a0a0a0"/><circle cx="33.6" cy="1.6" r="0.65" fill="#a0a0a0"/></g>
</svg>

</body></html>
